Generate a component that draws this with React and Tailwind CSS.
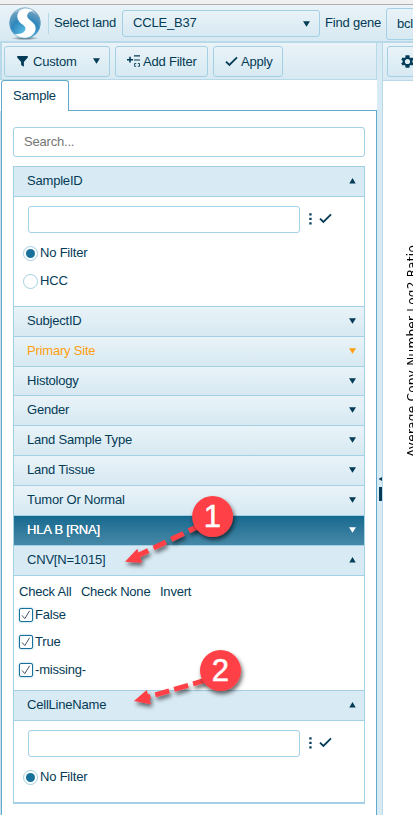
import React from "react";

const btn =
  "flex shrink-0 items-center rounded-[3px] border border-[#a3d0e4] bg-linear-to-b from-[#e9f3f8] to-[#d7e9f2]";

function Triangle({ up = false, className = "" }) {
  return (
    <svg width="7" height="6" viewBox="0 0 7 6" className={className} fill="currentColor">
      <path d={up ? "M3.5 0L6.7 5.4H0.3Z" : "M0 0.3H7L3.5 5.7Z"} />
    </svg>
  );
}

function Check({ className = "" }) {
  return (
    <svg width="13" height="11" viewBox="0 0 13 11" className={className} fill="none" stroke="currentColor" strokeWidth="1.8">
      <path d="M1 5.6L4.4 9L12 1.4" />
    </svg>
  );
}

function Logo() {
  return (
    <svg width="34" height="36" viewBox="0 0 34 36" className="ml-2 shrink-0">
      <defs>
        <radialGradient id="ball" cx="0.5" cy="0.85" r="0.85">
          <stop offset="0" stopColor="#5fc4ea" />
          <stop offset="0.55" stopColor="#2f87bd" />
          <stop offset="1" stopColor="#86a9c0" />
        </radialGradient>
        <radialGradient id="floor">
          <stop offset="0" stopColor="#4b5963" />
          <stop offset="1" stopColor="#4b5963" stopOpacity="0" />
        </radialGradient>
        <linearGradient id="gloss" x1="0" y1="0" x2="0" y2="1">
          <stop offset="0" stopColor="#fff" stopOpacity="0.65" />
          <stop offset="1" stopColor="#fff" stopOpacity="0" />
        </linearGradient>
        <clipPath id="round"><circle cx="17" cy="18" r="15.6" /></clipPath>
      </defs>
      <ellipse cx="17" cy="33.3" rx="14" ry="1.8" fill="url(#floor)" />
      <circle cx="17" cy="18" r="15.6" fill="url(#ball)" />
      <g clipPath="url(#round)">
        <path d="M1 12C4 4 11 1 17 2C25 2 30 6 32 12C24 5 10 3 1 12Z" fill="url(#gloss)" />
        <path d="M25.5 5.4C21 1.8 12.5 3 10 8C8 13 10.5 16.6 14.5 19.5C18 22 18.4 24.5 16 26.8C13.6 29 9.5 29.6 6 28.5C9 33 16 34.6 21.5 32C27.5 29 29.4 23 25.9 18.8C22.9 15.4 18.8 13.6 19.2 10.4C19.6 7.4 22.4 6 25.5 5.4Z" fill="#fff" />
      </g>
      <circle cx="17" cy="18" r="15.2" fill="none" stroke="#5f9fc4" strokeWidth="0.8" opacity="0.7" />
    </svg>
  );
}

function Header({ label, h = "h-[30px]", open = false, tone = "" }) {
  const bg = open
    ? "bg-[#d8eaf4]"
    : tone === "dark"
      ? "bg-linear-to-b from-[#14698f] to-[#4689a8] text-white"
      : "bg-linear-to-b from-[#e9f3f8] to-[#d7e9f2]";
  return (
    <div className={`flex items-center justify-between border-t border-[#a3d0e4] pl-[13px] pr-2 ${h} ${bg} ${tone === "orange" ? "text-[#ff9e0f]" : ""}`}>
      <span className={`-mt-px ${tone === "dark" ? "[text-shadow:0_0_0.5px_white]" : ""}`}>{label}</span>
      <Triangle up={open} className="-mt-px" />
    </div>
  );
}

function TextFilter() {
  return (
    <div className="flex items-center pl-[14px]">
      <div className="h-[27px] w-[272px] rounded-[3px] border border-[#a3d0e4] bg-white" />
      <svg width="3" height="12" viewBox="0 0 3 12" className="ml-[9px] -mt-0.5" fill="currentColor">
        <rect x="0.3" y="0.3" width="2.3" height="2.2" />
        <rect x="0.3" y="4.8" width="2.3" height="2.2" />
        <rect x="0.3" y="9.3" width="2.3" height="2.2" />
      </svg>
      <Check className="ml-[7px] -mt-0.5" />
    </div>
  );
}

function Radio({ label, on = false }) {
  return (
    <div className="flex h-7 items-center pl-[9px]">
      <span className="-mt-px flex size-[15px] items-center justify-center rounded-full border border-[#a3d0e4] bg-white">
        {on && <span className="size-[9px] rounded-full bg-[#17719a]" />}
      </span>
      <span className="ml-0.5 -mt-0.5">{label}</span>
    </div>
  );
}

function CheckRow({ label }) {
  return (
    <div className="flex h-[27.5px] items-center pl-[5px]">
      <span className="flex size-[14px] items-center justify-center rounded-[2px] border border-[#17719a] bg-white shadow-[0_0_2px_#6fb1d0]">
        <svg width="10" height="10" viewBox="0 0 10 10" fill="none" stroke="#456" strokeWidth="1">
          <path d="M1 5.4L3.8 8.6L8.6 0.8" />
        </svg>
      </span>
      <span className="ml-[2px]">{label}</span>
    </div>
  );
}

function Callout({ n, cx, cy }) {
  return (
    <g>
      <circle cx={cx} cy={cy} r="20.5" fill="#ff4146" filter="url(#drop)" />
      <text x={cx - 0.2} y={cy + 10.6} textAnchor="middle" fill="#fff" stroke="#fff" strokeWidth="0.5" fontSize="31" letterSpacing="0" fontFamily="'Liberation Sans', Arial, sans-serif">{n}</text>
    </g>
  );
}

function Annotations() {
  return (
    <svg width="413" height="815" viewBox="0 0 413 815" className="pointer-events-none absolute left-0 top-0">
      <defs>
        <filter id="drop" x="-30%" y="-30%" width="170%" height="170%">
          <feDropShadow dx="1.5" dy="3" stdDeviation="2" floodColor="#000" floodOpacity="0.6" />
        </filter>
      </defs>
      <g filter="url(#drop)" fill="#ff4146" stroke="none">
        <path d="M125 561.7L137.3 548.7L142 562.7Z" />
        <path d="M200 525.5L137 556" stroke="#ff4146" strokeWidth="5.2" strokeDasharray="13.7 5.9" strokeDashoffset="1.3" />
      </g>
      <g filter="url(#drop)" fill="#ff4146" stroke="none">
        <path d="M134 701L146.7 690L151 704.3Z" />
        <path d="M207 679.7L147 697.4" stroke="#ff4146" strokeWidth="5" strokeDasharray="14.5 5.2" />
      </g>
      <Callout n="1" cx={212.6} cy={516.5} />
      <Callout n="2" cx={220.5} cy={670.5} />
    </svg>
  );
}

export default function App() {
  return (
    <div className="relative flex h-[815px] w-[413px] flex-col overflow-hidden bg-white font-['Liberation_Sans',Arial,sans-serif] text-[13px] leading-4 tracking-[-0.2px] text-[#043b56]">
      <div className="h-[5px] shrink-0 border-b border-[#b0b0b0] bg-[#f0f0f0]" />
      <header className="flex h-9 shrink-0 items-center bg-linear-to-b from-[#e9f3f8] to-[#d7e9f2]">
        <Logo />
        <span className="ml-1.5 h-[21px] w-px shrink-0 bg-[#b5d9e9]" />
        <span className="ml-[5px] -mt-px w-[68px] shrink-0 whitespace-nowrap">Select land</span>
        <div className={`${btn} h-[27px] w-[198px] justify-between pl-[10px] pr-[9px]`}>
          <span>CCLE_B37</span>
          <Triangle className="mt-0.5" />
        </div>
        <span className="ml-[5px] -mt-px w-[61px] shrink-0 whitespace-nowrap">Find gene</span>
        <div className={`${btn} mt-px h-8 w-20 pl-[10px]`}>bcl</div>
      </header>

      <div className="flex min-h-0 flex-1 border-t-2 border-[#b8d9e8]">
        <aside className="flex w-[377px] shrink-0 flex-col">
          <div className="flex h-[37px] shrink-0 items-center gap-[5px] border-b border-l-2 border-r border-[#b8d9e8] bg-linear-to-b from-[#e9f3f8] to-[#d7e9f2] pl-0.5">
            <div className={`${btn} h-[31px] w-[106px] pl-3 pr-[9px]`}>
              <svg width="11" height="11" viewBox="0 0 11 11" fill="currentColor">
                <path d="M0.2 0H10.8V1.6L6.9 6V10.8L4.1 9V6L0.2 1.6Z" />
              </svg>
              <span className="ml-[5px] mt-px flex-1">Custom</span>
              <Triangle />
            </div>
            <div className={`${btn} h-[31px] w-[93px] pl-[11px]`}>
              <svg width="13" height="12" viewBox="0 0 13 12" fill="none" stroke="currentColor">
                <path d="M0 4.7H6M3 1.8V7.6" strokeWidth="1.6" />
                <path d="M7 0.8H13M7 5H13" strokeWidth="1.2" />
                <path d="M9.2 8.5H7.6V11.3H9.2M10.9 8.5H12.5V11.3H10.9" strokeWidth="0.9" />
              </svg>
              <span className="ml-[3px] mt-px whitespace-nowrap">Add Filter</span>
            </div>
            <div className={`${btn} h-[31px] w-[70px] pl-[11px]`}>
              <Check />
              <span className="ml-[3px] mt-px">Apply</span>
            </div>
          </div>

          <div className="flex h-[31px] shrink-0">
            <div className="ml-px w-[68px] rounded-t-[3px] border border-b-0 border-[#62aacb] bg-white pl-[11px] pt-[7px]">Sample</div>
            <div className="flex-1 border-b border-[#62aacb]" />
          </div>

          <div className="min-h-0 flex-1 border-l border-[#c9e0ec]">
            <div className="h-full border-x border-[#62aacb] px-[11px] pt-4">
              <div className="flex h-[30px] w-[352px] items-center rounded-[3px] border border-[#a3d0e4] pl-[10px] text-[#757575]">
                Search...
              </div>

              <div className="mt-[9px] w-[352px] border-x border-b-2 border-[#a3d0e4]">
                <Header label="SampleID" open />
                <div className="h-[110px] border-t border-[#a3d0e4] pt-[9px]">
                  <TextFilter />
                  <div className="pt-[7px]">
                    <Radio label="No Filter" on />
                    <Radio label="HCC" />
                  </div>
                </div>
                <Header label="SubjectID" />
                <Header label="Primary Site" tone="orange" />
                <Header label="Histology" h="h-[29px]" />
                <Header label="Gender" />
                <Header label="Land Sample Type" />
                <Header label="Land Tissue" />
                <Header label="Tumor Or Normal" />
                <Header label="HLA B [RNA]" tone="dark" />
                <Header label="CNV[N=1015]" open />
                <div className="h-[115px] border-t border-[#a3d0e4] pt-[8px]">
                  <div className="flex gap-[9.5px] pl-[5px]">
                    <span>Check All</span>
                    <span>Check None</span>
                    <span>Invert</span>
                  </div>
                  <div className="pt-px">
                    <CheckRow label="False" />
                    <CheckRow label="True" />
                    <CheckRow label="-missing-" />
                  </div>
                </div>
                <Header label="CellLineName" open />
                <div className="h-[82px] border-t border-[#a3d0e4] pt-[9px]">
                  <TextFilter />
                  <div className="pt-[7px]">
                    <Radio label="No Filter" on />
                  </div>
                </div>
              </div>
            </div>
          </div>
        </aside>

        <div className="flex w-[6px] shrink-0 flex-col items-end border-r border-[#b8d9e8] bg-[#d8eaf4] pt-[434px]">
          <svg width="4" height="4" viewBox="0 0 4 4" fill="#043b56"><path d="M4 0V4L0.5 2Z" /></svg>
          <div className="mt-[6px] h-[14px] w-[3px] shrink-0 bg-[#043b56]" />
        </div>

        <main className="flex w-[30px] shrink-0 flex-col">
          <div className="flex h-[38px] shrink-0 items-center border-b border-[#b8d9e8] bg-linear-to-b from-[#e9f3f8] to-[#d7e9f2] pl-1">
            <div className={`${btn} h-[31px] w-20 pl-[13px]`}>
              <svg width="13" height="13" viewBox="2 2 20 20" fill="currentColor" className="shrink-0">
                <path fillRule="evenodd" d="M19.4 13a7.5 7.5 0 0 0 0-2l2.1-1.7-2-3.5-2.5 1a7.5 7.5 0 0 0-1.7-1L15 2.2H9l-.4 3.6a7.5 7.5 0 0 0-1.7 1l-2.5-1-2 3.5L4.600 11a7.5 7.5 0 0 0 0 2l-2.2 1.7 2 3.5 2.5-1a7.5 7.5 0 0 0 1.7 1l.4 3.6h6l.3-3.6a7.5 7.5 0 0 0 1.7-1l2.5 1 2-3.5zM12 16a4 4 0 1 1 0-8 4 4 0 0 1 0 8z" />
              </svg>
            </div>
          </div>
          <div className="pl-[21px] pt-[162px]">
            <div className="h-[214px] w-4 rotate-180 whitespace-nowrap font-['DejaVu_Sans',Verdana,sans-serif] text-[12px] tracking-[0.3px] text-black [writing-mode:vertical-rl]">Average Copy Number Log2 Ratio</div>
          </div>
        </main>
      </div>
      <Annotations />
    </div>
  );
}
